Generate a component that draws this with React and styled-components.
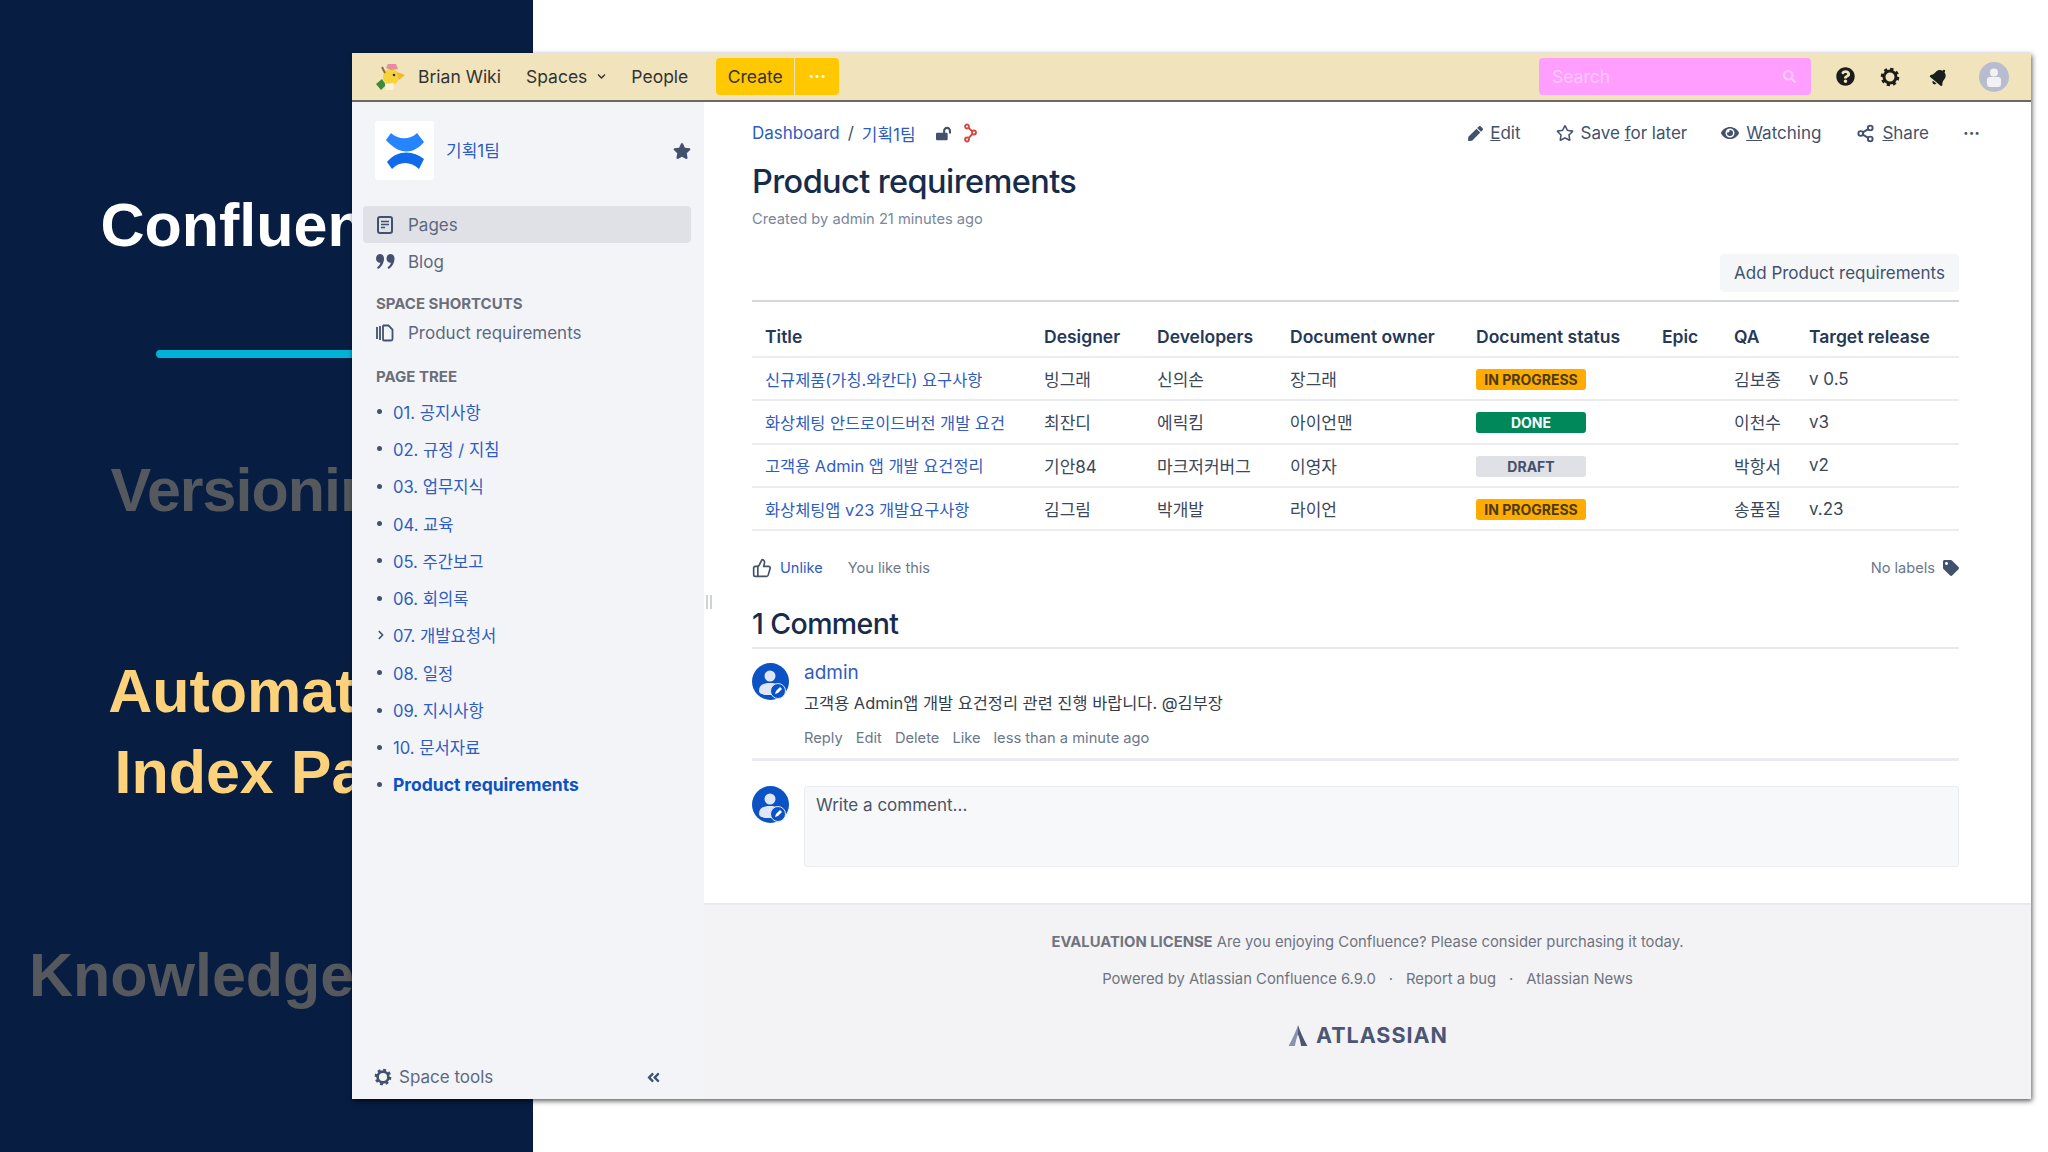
import React from 'react';
import styled, { createGlobalStyle } from 'styled-components';
import {
  FaAngleDoubleLeft,
  FaBell,
  FaChevronDown,
  FaChevronRight,
  FaEye,
  FaLockOpen,
  FaPen,
  FaQuestionCircle,
  FaRegStar,
  FaSearch,
  FaStar,
  FaTag,
} from 'react-icons/fa';
import { Share2, ThumbsUp } from 'lucide-react';

const blue = '#2f5cc0';
const slate = '#42526e';
const fontStack = '"Inter", "Noto Sans CJK KR", "Liberation Sans", sans-serif';

const GlobalStyle = createGlobalStyle`
  html, body {
    margin: 0;
    background: #fff;
    overflow: hidden;
  }
  * {
    box-sizing: border-box;
  }
`;

const Page = styled.div`
  position: relative;
  width: 2048px;
  height: 1152px;
  overflow: hidden;
  font-family: ${fontStack};
`;

const Slide = styled.aside`
  width: 533px;
  height: 1152px;
  padding-top: 185px;
  background: #071d42;
  display: flex;
  flex-direction: column;
  align-items: center;
  font-family: 'Liberation Sans', sans-serif;
`;

const SlideHeading = styled.div`
  font-size: 61px;
  line-height: 80px;
  font-weight: 700;
  white-space: nowrap;
  text-align: center;
  color: ${(p) => p.$color};
  letter-spacing: ${(p) => p.$track || 0}px;
  margin-top: ${(p) => p.$top || 0}px;
  margin-left: ${(p) => p.$indent || 0}px;
`;

const SlideRule = styled.div`
  width: 222px;
  height: 8px;
  margin-top: 85px;
  border-radius: 4px;
  background: #00b3d6;
`;

const Window = styled.div`
  position: absolute;
  left: 352px;
  top: 53px;
  width: 1679px;
  height: 1046px;
  display: flex;
  flex-direction: column;
  background: #fff;
  box-shadow: 1px 2px 5px rgba(0, 0, 0, 0.65);
  color: ${slate};
`;

const TopBar = styled.header`
  height: 49px;
  flex-shrink: 0;
  display: flex;
  align-items: center;
  padding: 0 1px 0 24px;
  background: #f1e4bc;
  border-bottom: 2px solid #6c6a60;
  font-size: 17.5px;
  color: #333;
`;

const BrandName = styled.span`
  margin-left: 12px;
  margin-right: 25px;
`;

const TopLink = styled.span`
  display: flex;
  align-items: center;
  gap: 10px;
  margin-right: ${(p) => p.$gap}px;
`;

const CreateGroup = styled.div`
  display: flex;
  gap: 1px;
  height: 37px;
`;

const CreateButton = styled.div`
  width: ${(p) => p.$width}px;
  display: flex;
  align-items: center;
  justify-content: center;
  background: #ffc800;
  color: ${(p) => (p.$light ? '#fff' : '#333')};
  border-radius: ${(p) => (p.$light ? '0 4px 4px 0' : '4px 0 0 4px')};
  font-weight: ${(p) => (p.$light ? 700 : 400)};
`;

const SearchBox = styled.div`
  margin-left: auto;
  width: 272px;
  height: 37px;
  display: flex;
  align-items: center;
  justify-content: space-between;
  padding: 0 15px 0 13px;
  background: #ff9eff;
  border-radius: 4px;
  color: #ffc8ff;
`;

const TopIcons = styled.div`
  display: flex;
  align-items: center;
  margin-left: 19px;
  color: #1c1c1c;
`;

const TopIconSlot = styled.span`
  width: ${(p) => p.$width}px;
  display: flex;
  align-items: center;
  justify-content: center;
`;

const Body = styled.div`
  flex: 1;
  display: flex;
  min-height: 0;
`;

const Sidebar = styled.nav`
  width: 352px;
  flex-shrink: 0;
  display: flex;
  flex-direction: column;
  padding: 19px 13px 0 11px;
  background: #f3f4f8;
  font-size: 17px;
  color: #5e6880;
`;

const SpaceHead = styled.div`
  display: flex;
  align-items: center;
  padding: 0 0 0 12px;
  height: 59px;
  margin-bottom: 26px;
`;

const SpaceLogo = styled.div`
  width: 59px;
  height: 59px;
  background: #fff;
  border-radius: 3px;
`;

const SpaceName = styled.span`
  margin: 0 0 2px 12px;
  font-size: 17px;
  color: ${blue};
`;

const SpaceStar = styled.span`
  margin-left: auto;
  display: flex;
  color: ${slate};
`;

const NavItem = styled.div`
  height: 37px;
  display: flex;
  align-items: center;
  padding-left: 12px;
  border-radius: 4px;
  background: ${(p) => (p.$active ? '#dfe1e6' : 'transparent')};
`;

const NavIcon = styled.span`
  width: 20px;
  margin-right: 13px;
  display: flex;
  align-items: center;
  justify-content: center;
  color: ${slate};
`;

const SectionTitle = styled.div`
  margin: ${(p) => p.$top}px 0 0 13px;
  font-size: 15px;
  line-height: 20px;
  font-weight: 700;
  color: #6b6f7a;
`;

const Tree = styled.ul`
  list-style: none;
  margin: 6px 0 0;
  padding: 0;
  display: flex;
  flex-direction: column;
`;

const TreeItem = styled.li`
  height: 37.3px;
  display: flex;
  align-items: center;
  padding-left: 13px;
  font-size: ${(p) => (p.$current ? 17.5 : 16.6)}px;
  font-weight: ${(p) => (p.$current ? 700 : 400)};
  color: ${(p) => (p.$current ? '#0b52c5' : blue)};
`;

const TreeMark = styled.span`
  width: 17px;
  flex-shrink: 0;
  display: flex;
  align-items: center;
  color: ${slate};
`;

const Dot = styled.i`
  display: block;
  width: 5px;
  height: 5px;
  margin-left: 1px;
  border-radius: 50%;
  background: ${slate};
`;

const SidebarFoot = styled.div`
  margin-top: auto;
  height: 44px;
  display: flex;
  align-items: center;
  padding: 0 30px 0 11px;
`;

const ToolsLabel = styled.span`
  margin-left: 7px;
`;

const Collapse = styled.span`
  margin-left: auto;
  display: flex;
  color: ${slate};
`;

const Main = styled.main`
  position: relative;
  flex: 1;
  display: flex;
  flex-direction: column;
  min-width: 0;
`;

const Resizer = styled.div`
  position: absolute;
  left: 2px;
  top: 493px;
  width: 6px;
  height: 14px;
  border-left: 2px solid #cfd2d8;
  border-right: 2px solid #cfd2d8;
`;

const Content = styled.div`
  flex: 1;
  padding: 19px 72px 0 48px;
`;

const TopRow = styled.div`
  height: 24px;
  display: flex;
  align-items: center;
  font-size: 17px;
`;

const Crumb = styled.span`
  color: ${blue};
`;

const Slash = styled.span`
  margin: 0 8px;
`;

const LockIcon = styled.span`
  display: flex;
  margin-left: 20px;
  margin-right: 12px;
  color: ${slate};
`;

const Actions = styled.div`
  margin-left: auto;
  margin-right: -21px;
  display: flex;
  align-items: center;
  color: ${slate};
`;

const Action = styled.span`
  display: flex;
  align-items: center;
  gap: 7px;
  margin-right: ${(p) => p.$gap}px;
`;

const PageTitle = styled.h1`
  margin: 17px 0 0;
  font-size: 32.5px;
  line-height: 40px;
  font-weight: 500;
  letter-spacing: -0.6px;
  color: #172b4d;
`;

const Byline = styled.div`
  margin-top: 7px;
  font-size: 14.7px;
  line-height: 20px;
  color: #7a869a;
`;

const AddRow = styled.div`
  display: flex;
  justify-content: flex-end;
  margin-top: 25px;
  padding-bottom: 8px;
  border-bottom: 2px solid #d3d6dc;
`;

const AddButton = styled.div`
  width: 239px;
  height: 38px;
  display: flex;
  align-items: center;
  justify-content: center;
  border-radius: 4px;
  background: #f5f6f8;
  font-size: 17px;
  color: ${slate};
`;

const Table = styled.table`
  width: 1207px;
  table-layout: fixed;
  border-collapse: collapse;
`;

const HeadCell = styled.th`
  height: 55px;
  padding: 14px 0 0 13px;
  border-bottom: 2px solid #ebecf0;
  text-align: left;
  font-weight: 600;
  font-size: 17.5px;
  color: #253858;
  white-space: nowrap;
`;

const Cell = styled.td`
  height: 43.3px;
  padding: 0 0 0 13px;
  border-bottom: 2px solid #ebecf0;
  white-space: nowrap;
  color: ${(p) => (p.$link ? blue : '#3c4759')};
  font-size: ${(p) => (p.$link ? 16.4 : 17)}px;
`;

const statusTheme = {
  progress: { bg: '#ffab00', fg: '#4a3a12' },
  done: { bg: '#00875a', fg: '#fff' },
  draft: { bg: '#dfe1e6', fg: slate },
};

const Status = styled.span`
  display: flex;
  align-items: center;
  justify-content: center;
  width: 110px;
  height: 21px;
  margin-top: 2px;
  border-radius: 3px;
  font-size: 14px;
  font-weight: 700;
  background: ${(p) => statusTheme[p.$kind].bg};
  color: ${(p) => statusTheme[p.$kind].fg};
`;

const LikeRow = styled.div`
  margin-top: 25px;
  height: 24px;
  display: flex;
  align-items: center;
  font-size: 14.6px;
  color: #6b778c;
`;

const LikeLink = styled.span`
  margin: 0 25px 0 8px;
  color: ${blue};
`;

const NoLabels = styled.span`
  margin-left: auto;
  display: flex;
  align-items: center;
  gap: 8px;
`;

const CommentsTitle = styled.h2`
  margin: 25px 0 0;
  height: 44px;
  font-size: 28.5px;
  line-height: 38px;
  font-weight: 500;
  letter-spacing: -0.6px;
  color: #172b4d;
  border-bottom: 2px solid #e8e9ed;
`;

const CommentRow = styled.div`
  display: flex;
  gap: 15px;
  padding-top: ${(p) => p.$top}px;
`;

const CommentBody = styled.div`
  flex: 1;
  margin-top: -3px;
`;

const Author = styled.div`
  font-size: 19px;
  line-height: 26px;
  color: ${blue};
`;

const CommentText = styled.div`
  margin-top: 6px;
  font-size: 16.4px;
  line-height: 22px;
  color: #333d4d;
`;

const CommentActions = styled.div`
  display: flex;
  gap: 13px;
  margin-top: 13px;
  font-size: 14.7px;
  line-height: 22px;
  color: #6b778c;
`;

const Rule = styled.div`
  height: 3px;
  margin-top: 9px;
  background: #ebecf0;
`;

const Editor = styled.div`
  flex: 1;
  height: 81px;
  padding: 7px 11px;
  background: #f7f8f9;
  border: 1px solid #ebecf0;
  border-radius: 3px;
  font-size: 17px;
  line-height: 22px;
  color: #4a5568;
`;

const Footer = styled.footer`
  height: 196px;
  flex-shrink: 0;
  display: flex;
  flex-direction: column;
  align-items: center;
  padding-top: 27px;
  background: #f3f3f5;
  border-top: 2px solid #e9e9ec;
  font-size: 14.8px;
  line-height: 20px;
  color: #6f7480;
`;

const FooterLine = styled.div`
  display: flex;
  gap: ${(p) => p.$gap || 0}px;
  margin-bottom: 17px;
  white-space: pre;
`;

const FooterBrand = styled.div`
  display: flex;
  align-items: center;
  gap: 7px;
  margin-top: 15px;
  font-size: 21.5px;
  line-height: 28px;
  font-weight: 700;
  letter-spacing: 1px;
  color: #4b5674;
`;

function BrandMark() {
  return (
    <svg width="30" height="27" viewBox="0 0 30 27">
      <circle cx="15" cy="14" r="8" fill="#f6d33c" />
      <path d="M10 5 L12 1 L20 1 L22 6 L15 7z" fill="#e88aa0" />
      <path d="M0 21 l6 -5 l4 6 l-5 5z" fill="#3d8a3a" />
      <path d="M21 9 l8 3 l-6 5z" fill="#f2b632" />
      <path d="M9 21 l9 -1 l-1 7 l-7 0z" fill="#f7f2da" />
      <path d="M6 4 l3 6" stroke="#8b6b2e" strokeWidth="2" />
      <circle cx="18" cy="12" r="1.3" fill="#333" />
    </svg>
  );
}

function ConfluenceMark() {
  return (
    <svg width="59" height="59" viewBox="0 0 59 59">
      <path d="M11 19 L16 12 C22 18 34 20 42 12 L49 21 C38 34 24 34 11 19z" fill="#2684ff" />
      <path d="M12 41 C22 29 38 29 49 38 L44 48 C36 40 24 40 17 48z" fill="#0f6bec" />
    </svg>
  );
}

function GearIcon({ size, color }) {
  return (
    <svg width={size} height={size} viewBox="0 0 20 20" fill="none" stroke={color}>
      <circle cx="10" cy="10" r="6" strokeWidth="3" />
      <circle cx="10" cy="10" r="8" strokeWidth="2.6" strokeDasharray="3.2 3.08" />
    </svg>
  );
}

function PageIcon() {
  return (
    <svg width="16" height="18" viewBox="0 0 16 18" fill="none" stroke="#42526e" strokeWidth="2">
      <rect x="1" y="1" width="14" height="16" rx="2" />
      <path d="M4 5.5h8M4 8.5h8M4 11.5h4" strokeWidth="1.6" />
    </svg>
  );
}

function QuoteIcon() {
  return (
    <svg width="19" height="15" viewBox="0 0 19 15" fill="#42526e">
      <path d="M4 0 C6.5 0 8 2 8 4.5 C8 9 5.5 13 2 15 L1 13.5 C3 12 4 10.5 4.4 8.8 C1.8 9 0 7 0 4.5 C0 2 1.8 0 4 0z" />
      <path d="M14.5 0 C17 0 18.5 2 18.5 4.5 C18.5 9 16 13 12.5 15 L11.5 13.5 C13.5 12 14.5 10.5 14.9 8.8 C12.3 9 10.5 7 10.5 4.5 C10.5 2 12.3 0 14.5 0z" />
    </svg>
  );
}

function ShortcutIcon() {
  return (
    <svg width="18" height="18" viewBox="0 0 18 18" fill="none" stroke="#42526e" strokeWidth="1.8">
      <path d="M1 3 V15 M4 2 V16" />
      <path d="M7.5 1.5 H12.5 L16.5 5.5 V15 A1.5 1.5 0 0 1 15 16.5 H8 A1 1 0 0 1 7 15.5 V2z" />
    </svg>
  );
}

function Avatar() {
  return (
    <svg width="37" height="37" viewBox="0 0 37 37">
      <circle cx="18.5" cy="18.5" r="18.5" fill="#0b52c5" />
      <circle cx="18" cy="13" r="5.5" fill="#dfe6f5" />
      <path d="M7 28 C7 22 11 20 18 20 C25 20 29 22 29 28 C29 31 25 32 18 32 C11 32 7 31 7 28z" fill="#dfe6f5" />
      <circle cx="26" cy="28" r="7.5" fill="#0b52c5" stroke="#dfe6f5" strokeWidth="1" />
      <path d="M23 31 l1 -3 l4 -4 l2 2 l-4 4z" fill="#fff" />
    </svg>
  );
}

function RestrictionGraph() {
  return (
    <svg width="14" height="20" viewBox="0 0 14 20" fill="none" stroke="#d9453d" strokeWidth="1.8">
      <circle cx="4" cy="3.5" r="2" />
      <circle cx="11" cy="9.5" r="2" />
      <circle cx="4" cy="16.5" r="2" />
      <path d="M5.5 5 L9.5 8.5 M9.5 11 L5.5 15" />
    </svg>
  );
}

const treeItems = [
  '01. 공지사항',
  '02. 규정 / 지침',
  '03. 업무지식',
  '04. 교육',
  '05. 주간보고',
  '06. 회의록',
  '07. 개발요청서',
  '08. 일정',
  '09. 지시사항',
  '10. 문서자료',
];

const columns = [
  { title: 'Title', width: 279 },
  { title: 'Designer', width: 113 },
  { title: 'Developers', width: 133 },
  { title: 'Document owner', width: 186 },
  { title: 'Document status', width: 186 },
  { title: 'Epic', width: 72 },
  { title: 'QA', width: 75 },
  { title: 'Target release', width: 163 },
];

const rows = [
  ['신규제품(가칭.와칸다) 요구사항', '빙그래', '신의손', '장그래', 'progress', '김보종', 'v 0.5'],
  ['화상체팅 안드로이드버전 개발 요건', '최잔디', '에릭킴', '아이언맨', 'done', '이천수', 'v3'],
  ['고객용 Admin 앱 개발 요건정리', '기안84', '마크저커버그', '이영자', 'draft', '박항서', 'v2'],
  ['화상체팅앱 v23 개발요구사항', '김그림', '박개발', '라이언', 'progress', '송품질', 'v.23'],
];

const statusLabel = { progress: 'IN PROGRESS', done: 'DONE', draft: 'DRAFT' };

export default function App() {
  return (
    <Page>
      <GlobalStyle />
      <Slide>
        <SlideHeading $color="#fff">Confluence</SlideHeading>
        <SlideRule />
        <SlideHeading $color="#55595d" $top={92} $track={-1} $indent={-10}>Versioning</SlideHeading>
        <SlideHeading $color="#fdd27b" $top={121} $indent={2}>Automated</SlideHeading>
        <SlideHeading $color="#fdd27b" $top={1} $indent={18}>Index Page</SlideHeading>
        <SlideHeading $color="#55595d" $top={123} $indent={13}>Knowledge Base</SlideHeading>
      </Slide>

      <Window>
        <TopBar>
          <BrandMark />
          <BrandName>Brian Wiki</BrandName>
          <TopLink $gap={25}>
            Spaces <FaChevronDown size={9} />
          </TopLink>
          <TopLink $gap={28}>People</TopLink>
          <CreateGroup>
            <CreateButton $width={78}>Create</CreateButton>
            <CreateButton $width={44} $light>···</CreateButton>
          </CreateGroup>
          <SearchBox>
            Search
            <FaSearch size={13} />
          </SearchBox>
          <TopIcons>
            <TopIconSlot $width={30}><FaQuestionCircle size={19} /></TopIconSlot>
            <TopIconSlot $width={60}><GearIcon size={20} color="#1c1c1c" /></TopIconSlot>
            <TopIconSlot $width={38}>
              <FaBell size={18} style={{ transform: 'rotate(40deg)' }} />
            </TopIconSlot>
            <TopIconSlot $width={72}>
              <svg width="30" height="30" viewBox="0 0 30 30">
                <circle cx="15" cy="15" r="15" fill="#b9bccf" />
                <circle cx="15" cy="10.5" r="4" fill="#f2f2f6" />
                <path d="M8 17 a3 3 0 0 1 3 -2 h8 a3 3 0 0 1 3 2 v5 a3 3 0 0 1 -3 3 h-8 a3 3 0 0 1 -3 -3z" fill="#f2f2f6" />
              </svg>
            </TopIconSlot>
          </TopIcons>
        </TopBar>

        <Body>
          <Sidebar>
            <SpaceHead>
              <SpaceLogo><ConfluenceMark /></SpaceLogo>
              <SpaceName>기획1팀</SpaceName>
              <SpaceStar><FaStar size={18} /></SpaceStar>
            </SpaceHead>
            <NavItem $active>
              <NavIcon><PageIcon /></NavIcon>
              Pages
            </NavItem>
            <NavItem>
              <NavIcon><QuoteIcon /></NavIcon>
              Blog
            </NavItem>
            <SectionTitle $top={14}>SPACE SHORTCUTS</SectionTitle>
            <NavItem>
              <NavIcon><ShortcutIcon /></NavIcon>
              Product requirements
            </NavItem>
            <SectionTitle $top={16}>PAGE TREE</SectionTitle>
            <Tree>
              {treeItems.map((item) => (
                <TreeItem key={item}>
                  <TreeMark>
                    {item.startsWith('07') ? <FaChevronRight size={10} /> : <Dot />}
                  </TreeMark>
                  {item}
                </TreeItem>
              ))}
              <TreeItem $current>
                <TreeMark><Dot /></TreeMark>
                Product requirements
              </TreeItem>
            </Tree>
            <SidebarFoot>
              <GearIcon size={18} color="#42526e" />
              <ToolsLabel>Space tools</ToolsLabel>
              <Collapse><FaAngleDoubleLeft size={15} /></Collapse>
            </SidebarFoot>
          </Sidebar>

          <Main>
            <Resizer />
            <Content>
              <TopRow>
                <Crumb>Dashboard</Crumb>
                <Slash>/</Slash>
                <Crumb>기획1팀</Crumb>
                <LockIcon><FaLockOpen size={15} /></LockIcon>
                <RestrictionGraph />
                <Actions>
                  <Action $gap={35}>
                    <FaPen size={15} />
                    <span><u>E</u>dit</span>
                  </Action>
                  <Action $gap={34}>
                    <FaRegStar size={18} />
                    <span>Save <u>f</u>or later</span>
                  </Action>
                  <Action $gap={35}>
                    <FaEye size={18} />
                    <span><u>W</u>atching</span>
                  </Action>
                  <Action $gap={34}>
                    <Share2 size={19} strokeWidth={2.4} />
                    <span><u>S</u>hare</span>
                  </Action>
                  <Action $gap={0}>
                    <b>···</b>
                  </Action>
                </Actions>
              </TopRow>
              <PageTitle>Product requirements</PageTitle>
              <Byline>Created by admin 21 minutes ago</Byline>
              <AddRow><AddButton>Add Product requirements</AddButton></AddRow>

              <Table>
                <colgroup>
                  {columns.map((col) => <col key={col.title} width={col.width} />)}
                </colgroup>
                <thead>
                  <tr>
                    {columns.map((col) => <HeadCell key={col.title}>{col.title}</HeadCell>)}
                  </tr>
                </thead>
                <tbody>
                  {rows.map((row) => (
                    <tr key={row[0]}>
                      <Cell $link>{row[0]}</Cell>
                      <Cell>{row[1]}</Cell>
                      <Cell>{row[2]}</Cell>
                      <Cell>{row[3]}</Cell>
                      <Cell><Status $kind={row[4]}>{statusLabel[row[4]]}</Status></Cell>
                      <Cell />
                      <Cell>{row[5]}</Cell>
                      <Cell>{row[6]}</Cell>
                    </tr>
                  ))}
                </tbody>
              </Table>

              <LikeRow>
                <ThumbsUp size={20} color="#42526e" />
                <LikeLink>Unlike</LikeLink>
                You like this
                <NoLabels>
                  No labels
                  <FaTag size={16} color="#42526e" />
                </NoLabels>
              </LikeRow>

              <CommentsTitle>1 Comment</CommentsTitle>
              <CommentRow $top={14}>
                <Avatar />
                <CommentBody>
                  <Author>admin</Author>
                  <CommentText>고객용 Admin앱 개발 요건정리 관련 진행 바랍니다. @김부장</CommentText>
                  <CommentActions>
                    <span>Reply</span>
                    <span>Edit</span>
                    <span>Delete</span>
                    <span>Like</span>
                    <span>less than a minute ago</span>
                  </CommentActions>
                </CommentBody>
              </CommentRow>
              <Rule />
              <CommentRow $top={25}>
                <Avatar />
                <Editor>Write a comment...</Editor>
              </CommentRow>
            </Content>

            <Footer>
              <FooterLine>
                <b>EVALUATION LICENSE</b> Are you enjoying Confluence? Please consider purchasing it today.
              </FooterLine>
              <FooterLine $gap={13}>
                <span>Powered by Atlassian Confluence 6.9.0</span>
                <span>·</span>
                <span>Report a bug</span>
                <span>·</span>
                <span>Atlassian News</span>
              </FooterLine>
              <FooterBrand>
                <svg width="22" height="21" viewBox="0 0 20 20">
                  <path d="M10 0 C12 6 15 13 19 20 H13 C12 15 11 11 10 9z" fill="#4b5674" />
                  <path d="M10 0 C8 6 5 13 1 20 H7 C8 15 9 11 10 9z" fill="#8b93ab" />
                </svg>
                ATLASSIAN
              </FooterBrand>
            </Footer>
          </Main>
        </Body>
      </Window>
    </Page>
  );
}
